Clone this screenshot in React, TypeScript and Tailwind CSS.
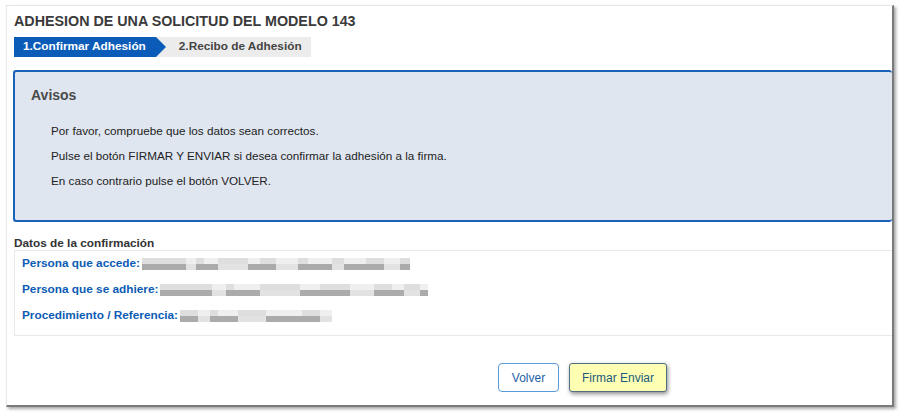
import React from 'react'

const font = { fontFamily: '"Liberation Sans", Arial, sans-serif' }

function Blur({ w }: { w: number[] }) {
  // pixelated placeholder for redacted data
  return (
    <span className="ml-[2px] inline-flex flex-col align-middle">
      <span className="flex h-[6px]">
        {w.map((x, i) => (
          <span key={i} className={i % 2 ? 'bg-[#efefef]' : 'bg-[#dedede]'} style={{ width: x }} />
        ))}
      </span>
      <span className="flex h-[6px]">
        {w.map((x, i) => (
          <span key={i} className={i % 3 === 1 ? 'bg-[#e2e2e2]' : 'bg-[#ababab]'} style={{ width: x }} />
        ))}
      </span>
    </span>
  )
}

function Row({ label, w }: { label: string; w: number[] }) {
  return (
    <div className="flex h-[26px] items-center">
      <span className="text-[11.8px] font-bold text-[#0b5bb5]">{label}</span>
      <Blur w={w} />
    </div>
  )
}

export default function App() {
  return (
    <div className="h-[413px] w-[900px] bg-white pl-[6px] pt-[5px]" style={font}>
      <div className="h-[402px] w-[888px] border-l border-t border-[#e6e6e6] border-r-2 border-b-2 border-r-[#7a7a7a] border-b-[#7a7a7a] bg-white shadow-[2px_2px_3px_rgba(0,0,0,0.35)]">
        <div className="pl-[7px] pt-[6px]">
          <h1 className="text-[14.3px] font-bold leading-[18px] text-[#3a3a3a]">
            ADHESION DE UNA SOLICITUD DEL MODELO 143
          </h1>
          <div className="mt-[7px] flex h-[20px] text-[11.8px] font-bold">
            <div className="relative flex items-center bg-[#0a5cb8] pl-[9px] pr-[10px] text-white">
              1.Confirmar Adhesión
              <span className="absolute left-full top-0 h-0 w-0 border-y-[10px] border-l-[10px] border-y-transparent border-l-[#0a5cb8]" />
            </div>
            <div className="flex w-[155px] items-center bg-[#ececec] pl-[23px] text-[#444]">2.Recibo de Adhesión</div>
          </div>
        </div>

        <div className="ml-[6px] mt-[13px] h-[152px] rounded-[3px] border-2 border-r-0 border-[#1a62b8] bg-[#dfe6f0] pl-[16px]">
          <div className="pt-[13px] text-[14px] font-bold text-[#4a4a4a]">Avisos</div>
          <div className="mt-[17px] space-y-[9px] pl-[20px] text-[11.7px] leading-[16px] text-[#222]">
            <p>Por favor, compruebe que los datos sean correctos.</p>
            <p>Pulse el botón FIRMAR Y ENVIAR si desea confirmar la adhesión a la firma.</p>
            <p>En caso contrario pulse el botón VOLVER.</p>
          </div>
        </div>

        <div className="mt-[14px] pl-[7px] text-[11.8px] font-bold leading-[14px] text-[#333]">Datos de la confirmación</div>
        <div className="ml-[7px] mt-[0px] h-[86px] border border-r-0 border-[#e6eaef] pl-[7px]">
          <Row label="Persona que accede:" w={[44, 10, 8, 14, 30, 12, 16, 22, 10, 24, 12, 22, 18, 16, 10]} />
          <Row label="Persona que se adhiere:" w={[52, 14, 8, 26, 40, 20, 30, 24, 18, 12, 16, 8]} />
          <Row label="Procedimiento / Referencia:" w={[18, 12, 8, 20, 28, 36, 18, 12]} />
        </div>

        <div className="flex justify-end gap-[10px] pr-[225px] pt-[27px]">
          <button className="h-[29px] w-[61px] rounded-[4px] border border-[#5b9ad6] bg-white text-[12px] text-[#1f5fa8]">
            Volver
          </button>
          <button className="h-[29px] w-[98px] rounded-[3px] border border-[#4f6f82] bg-[#ffffb4] text-[12px] text-[#1d5b7e] shadow-[1px_2px_4px_rgba(0,0,0,0.45)]">
            Firmar Enviar
          </button>
        </div>
      </div>
    </div>
  )
}
